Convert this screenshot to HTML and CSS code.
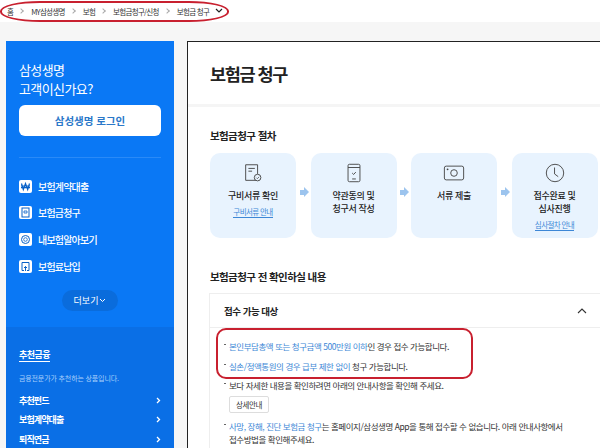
FILE: index.html
```html
<!DOCTYPE html>
<html lang="ko">
<head>
    <meta charset="UTF-8">
    <meta name="viewport" content="width=device-width, initial-scale=1.0">
    <title>보험금 청구</title>
    <link rel="stylesheet" href="styles.css">
</head>
<body>
    <nav class="crumbs">
        <span>홈</span><i class="sep"></i>
        <span>MY삼성생명</span><i class="sep"></i>
        <span>보험</span><i class="sep"></i>
        <span>보험금청구/신청</span><i class="sep"></i>
        <span>보험금 청구</span>
        <svg class="crumb-arrow" width="8" height="6" viewBox="0 0 8 6"><path d="M1 1l3 3 3-3" fill="none" stroke="#222" stroke-width="1.2"/></svg>
    </nav>

    <div class="layout">
        <aside class="side">
            <div class="side-top">
                <p class="side-title">삼성생명<br>고객이신가요?</p>
                <a class="login">삼성생명 로그인</a>
                <hr class="side-line">
                <ul class="menu">
                    <li>
                        <svg viewBox="0 0 13 13"><rect width="13" height="13" rx="2" fill="#fff"/><path d="M2.5 3.5l1.8 6 2.2-6 2.2 6 1.8-6M2 6h9M2 7.6h9" fill="none" stroke="#0a62c8" stroke-width="1.2"/></svg>
                        보험계약대출
                    </li>
                    <li>
                        <svg viewBox="0 0 13 13"><rect width="13" height="13" rx="2" fill="#fff"/><rect x="3" y="2" width="7" height="9" fill="none" stroke="#0a62c8"/><path d="M5 5h3v2H5z" fill="none" stroke="#0a62c8" stroke-width=".8"/></svg>
                        보험금청구
                    </li>
                    <li>
                        <svg viewBox="0 0 13 13"><rect width="13" height="13" rx="2" fill="#fff"/><circle cx="6.5" cy="6.5" r="4" fill="none" stroke="#0a62c8"/><circle cx="6.5" cy="6.5" r="1.8" fill="none" stroke="#0a62c8" stroke-width=".8"/></svg>
                        내보험알아보기
                    </li>
                    <li>
                        <svg viewBox="0 0 13 13"><rect width="13" height="13" rx="2" fill="#fff"/><path d="M5 10.5H3v-8h7v8H8M6.5 11V6.5M5 8l1.5-1.5L8 8" fill="none" stroke="#0a62c8"/></svg>
                        보험료납입
                    </li>
                </ul>
                <a class="more">더보기
                    <svg width="7" height="5" viewBox="0 0 7 5"><path d="M1 1l2.5 2.5L6 1" fill="none" stroke="#fff"/></svg>
                </a>
            </div>
            <div class="side-bottom">
                <h3 class="rec-title">추천금융</h3>
                <p class="rec-desc">금융전문가가 추천하는 상품입니다.</p>
                <ul class="rec-list">
                    <li>추천펀드<svg width="5" height="7" viewBox="0 0 5 7"><path d="M1 1l2.5 2.5L1 6" fill="none" stroke="#fff" stroke-width="1.3"/></svg></li>
                    <li>보험계약대출<svg width="5" height="7" viewBox="0 0 5 7"><path d="M1 1l2.5 2.5L1 6" fill="none" stroke="#fff" stroke-width="1.3"/></svg></li>
                    <li>퇴직연금<svg width="5" height="7" viewBox="0 0 5 7"><path d="M1 1l2.5 2.5L1 6" fill="none" stroke="#fff" stroke-width="1.3"/></svg></li>
                </ul>
            </div>
        </aside>

        <main class="panel">
            <h1 class="page-title">보험금 청구</h1>
            <div class="band"></div>

            <h2 class="sec-title first">보험금청구 절차</h2>
            <div class="steps">
                <div class="step">
                    <svg class="step-icon" width="22" height="22" viewBox="0 0 24 24"><path d="M15 20H4V3h13v10" fill="none" stroke="#444"/><path d="M7 7h7M7 10h4" stroke="#444"/><circle cx="17" cy="17" r="3.6" fill="none" stroke="#444"/><path d="M15.5 17l1.2 1.2 2-2" fill="none" stroke="#444" stroke-width=".8"/></svg>
                    <strong>구비서류 확인</strong>
                    <a class="step-link">구비서류 안내</a>
                </div>
                <div class="step">
                    <svg class="step-icon" width="22" height="22" viewBox="0 0 24 24"><rect x="5.5" y="2.5" width="13" height="19" rx="1.5" fill="none" stroke="#444"/><path d="M5.5 6h13M10 18.5h4" stroke="#444"/><path d="M10 12l1.6 1.6 2.4-2.6" fill="none" stroke="#444"/></svg>
                    <strong>약관동의 및<br>청구서 작성</strong>
                </div>
                <div class="step">
                    <svg class="step-icon" width="22" height="22" viewBox="0 0 24 24"><rect x="1.5" y="4.5" width="21" height="15" rx="2" fill="none" stroke="#444"/><circle cx="12" cy="12" r="3.6" fill="none" stroke="#444"/><circle cx="5" cy="8" r="1" fill="#444"/></svg>
                    <strong>서류 제출</strong>
                </div>
                <div class="step">
                    <svg class="step-icon" width="22" height="22" viewBox="0 0 24 24"><circle cx="12" cy="12" r="9.5" fill="none" stroke="#444"/><path d="M11.5 6v7l4 3" fill="none" stroke="#444"/></svg>
                    <strong>접수완료 및<br>심사진행</strong>
                    <a class="step-link">심사절차 안내</a>
                </div>
            </div>

            <h2 class="sec-title second">보험금청구 전 확인하실 내용</h2>
            <section class="accordion">
                <header class="acc-head">
                    접수 가능 대상
                    <svg width="10" height="6" viewBox="0 0 10 6"><path d="M1 5l4-4 4 4" fill="none" stroke="#333" stroke-width="1.1"/></svg>
                </header>
                <ul class="notes">
                    <li><em>본인부담총액 또는 청구금액 500만원 이하</em>인 경우 접수 가능합니다.</li>
                    <li><em>실손/정액통원의 경우 급부 제한 없이</em> 청구 가능합니다.</li>
                    <li>보다 자세한 내용을 확인하려면 아래의 안내사항을 확인해 주세요.
                        <a class="detail-btn">상세안내</a>
                    </li>
                    <li><em>사망, 장해, 진단 보험금 청구</em>는 홈페이지/삼성생명 App을 통해 접수할 수 없습니다. 아래 안내사항에서<br>접수방법을 확인해주세요.</li>
                </ul>
            </section>
        </main>
    </div>

    <!-- 빨간 표시 -->
    <div class="mark mark-crumbs"></div>
    <div class="mark mark-notes"></div>
</body>
</html>
```

FILE: styles.css
```css
* {
    box-sizing: border-box;
}
html, body {
    height: 448px;
    overflow: hidden;
}
body {
    margin: 0;
    font-family: "Noto Sans CJK KR", "Noto Sans", sans-serif;
    background-color: #f6f6f6;
    color: #222;
    position: relative;
}
ul {
    list-style: none;
    margin: 0;
    padding: 0;
}

.crumbs {
    height: 22px;
    background-color: #fff;
    padding: 0 0 0 7px;
    display: flex;
    align-items: center;
    font-size: 7.5px;
    letter-spacing: -0.7px;
    color: #333;
}
.sep {
    width: 4px;
    height: 4px;
    margin: 0 8px 0 6px;
    border-top: 1px solid #aaa;
    border-right: 1px solid #aaa;
    transform: rotate(45deg);
}
.crumb-arrow {
    margin-left: 6px;
}

.layout {
    display: flex;
    padding: 19px 0 0 6px;
    gap: 13px;
}

.side {
    width: 168px;
    height: 407px;
    background-color: #0a78f5;
    color: #fff;
    flex: none;
}
.side-top {
    height: 286px;
    padding: 19px 13px 0;
}
.side-title {
    margin: 0;
    font-size: 13px;
    line-height: 19px;
    letter-spacing: -0.6px;
}
.login {
    display: block;
    height: 31px;
    margin-top: 7px;
    background-color: #fff;
    border-radius: 6px;
    color: #2b78c9;
    font-size: 10.5px;
    font-weight: 700;
    line-height: 31px;
    text-align: center;
}
.side-line {
    border: 0;
    border-top: 1px solid #2a8af7;
    margin: 21px 0 0;
}
.menu {
    margin-top: 15px;
}
.menu li {
    height: 26.6px;
    display: flex;
    align-items: center;
    gap: 6px;
    font-size: 10px;
    font-weight: 500;
    letter-spacing: -0.8px;
}
.menu svg {
    width: 13px;
    height: 13px;
}
.more {
    width: 56px;
    height: 21px;
    margin: 11px auto 0;
    background-color: #0a6cdc;
    border-radius: 11px;
    font-size: 9px;
    display: flex;
    align-items: center;
    justify-content: center;
    gap: 1px;
}
.side-bottom {
    height: 121px;
    background-color: #0a6fe6;
    padding: 21px 13px 0;
}
.rec-title {
    margin: 0;
    width: fit-content;
    font-size: 9px;
    line-height: 13px;
    font-weight: 700;
    letter-spacing: -0.5px;
    border-bottom: 1px solid #fff;
}
.rec-desc {
    margin: 10px 0 0;
    font-size: 7px;
    line-height: 12px;
    letter-spacing: -0.15px;
    color: #a9d0fb;
}
.rec-list {
    margin-top: 7px;
}
.rec-list li {
    height: 19.3px;
    display: flex;
    align-items: center;
    justify-content: space-between;
    font-size: 9px;
    font-weight: 700;
    letter-spacing: -0.9px;
}

.panel {
    flex: 1;
    height: 407px;
    background-color: #fff;
    border-top: 1px solid #222;
    border-left: 1px solid #222;
}
.page-title {
    margin: 0;
    height: 62px;
    padding: 19px 0 0 22px;
    font-size: 17.5px;
    line-height: 26px;
    font-weight: 700;
    letter-spacing: -1.4px;
}
.band {
    height: 3px;
    background-color: #f5f5f5;
}
.sec-title {
    margin: 0;
    padding-left: 22px;
    font-size: 10.5px;
    line-height: 16px;
    font-weight: 700;
    letter-spacing: -0.6px;
}
.sec-title.first {
    margin-top: 21px;
}
.sec-title.second {
    margin-top: 31px;
}

.steps {
    display: grid;
    grid-template-columns: repeat(4, 86px);
    gap: 14.5px;
    margin: 9px 0 0 22px;
}
.step {
    height: 85px;
    background-color: #e8f3fe;
    border-radius: 10px;
    padding-top: 9px;
    display: flex;
    flex-direction: column;
    align-items: center;
    text-align: center;
    position: relative;
}
.step + .step::before {
    content: "";
    position: absolute;
    left: -11px;
    top: 37px;
    width: 4px;
    height: 5px;
    background-color: #9cc4ee;
}
.step + .step::after {
    content: "";
    position: absolute;
    left: -7px;
    top: 34px;
    border-left: 5px solid #9cc4ee;
    border-top: 5.5px solid transparent;
    border-bottom: 5.5px solid transparent;
}
.step strong {
    margin-top: 5px;
    font-size: 9px;
    line-height: 13.2px;
    font-weight: 500;
    letter-spacing: -0.3px;
}
.step-link {
    margin-top: 4px;
    font-size: 7.5px;
    line-height: 11px;
    letter-spacing: -0.6px;
    color: #3d87d6;
    border-bottom: 1px solid #3d87d6;
}

.accordion {
    margin: 8px 0 0 21px;
    border: 1px solid #eee;
    border-right: 0;
    height: 170px;
}
.acc-head {
    height: 34px;
    padding: 0 13px 0 14px;
    display: flex;
    align-items: center;
    justify-content: space-between;
    border-bottom: 1px solid #eee;
    font-size: 9.5px;
    font-weight: 700;
    letter-spacing: -0.5px;
}
.notes {
    padding: 12px 14px 0;
}
.notes li {
    position: relative;
    padding-left: 5px;
    margin-bottom: 6.5px;
    font-size: 8.5px;
    line-height: 13px;
    letter-spacing: -0.45px;
    color: #333;
}
.notes li::before {
    content: "";
    position: absolute;
    left: 0;
    top: 4px;
    width: 2px;
    height: 1px;
    background-color: #666;
}
.notes em {
    font-style: normal;
    color: #3d87d6;
}
.detail-btn {
    display: block;
    width: 40px;
    height: 17px;
    margin-top: 4px;
    border: 1px solid #ddd;
    border-radius: 2px;
    font-size: 7.5px;
    line-height: 15px;
    text-align: center;
}

/* 빨간 표시 */
.mark {
    position: absolute;
    border: 2.5px solid #c8202f;
}
.mark-crumbs {
    left: 0;
    top: 1px;
    width: 229px;
    height: 21px;
    border-radius: 40px / 10px;
    border-width: 2px;
}
.mark-notes {
    left: 216px;
    top: 328px;
    width: 257px;
    height: 51px;
    border-radius: 10px;
}
```
